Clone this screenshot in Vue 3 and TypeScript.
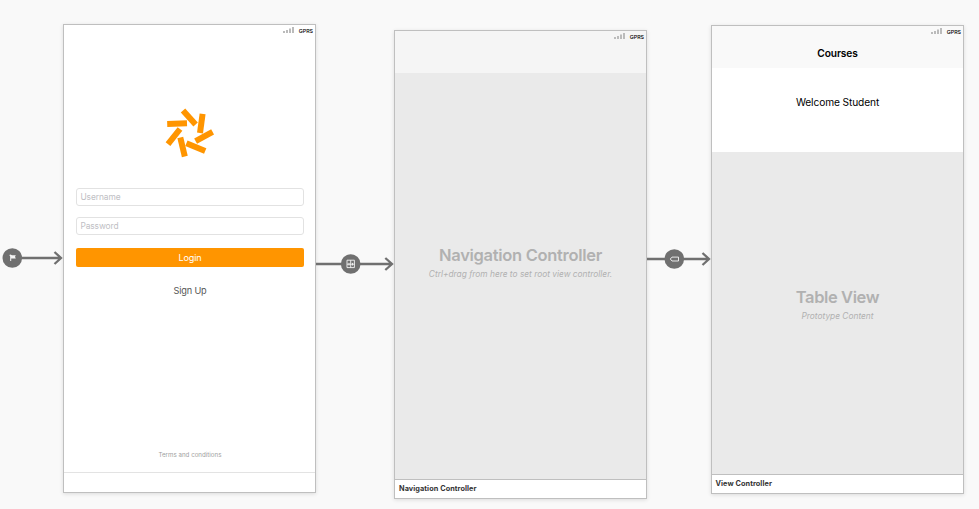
<script setup lang="ts">
interface Segue {
  name: string
  kind: 'entry' | 'root' | 'relation'
}

const segues: Segue[] = [
  { name: 'start', kind: 'entry' },
  { name: 'login', kind: 'root' },
  { name: 'courses', kind: 'relation' },
]

const blades: string[] = [
  'M33 15.6 45.6 29.4',
  'M52.6 18.8 50 38',
  'M62.6 36.9 45.6 46.2',
  'M36.4 48.2 55.2 56',
  'M30.3 42.5 34.8 61.5',
  'M30 34 18 49.2',
  'M17.2 29 37 28.3',
]
</script>

<template>
  <main class="canvas">
    <section class="scene scene-login">
      <div class="status">
        <svg class="signal" width="12" height="7" viewBox="0 0 12 7">
          <path d="M0 4h2V6H0zM3 3h2V6H3zM6 1.5h2V6H6zM9 0h2v6H9z" />
        </svg>
        <span>GPRS</span>
      </div>
      <div class="login-body">
        <svg class="logo" width="80" height="75" viewBox="0 0 80 75">
          <path v-for="d in blades" :key="d" :d="d" />
        </svg>
        <div class="field">Username</div>
        <div class="field">Password</div>
        <div class="button">Login</div>
        <div class="signup">Sign Up</div>
        <div class="terms">Terms and conditions</div>
      </div>
      <footer class="dock"></footer>
    </section>

    <section class="scene scene-nav">
      <div class="bar">
        <div class="status">
          <svg class="signal" width="12" height="7" viewBox="0 0 12 7">
            <path d="M0 4h2V6H0zM3 3h2V6H3zM6 1.5h2V6H6zM9 0h2v6H9z" />
          </svg>
          <span>GPRS</span>
        </div>
      </div>
      <div class="placeholder">
        <h2 class="nav-title">Navigation Controller</h2>
        <p class="nav-hint">Ctrl+drag from here to set root view controller.</p>
      </div>
      <footer class="dock"><span>Navigation Controller</span></footer>
    </section>

    <section class="scene scene-courses">
      <div class="bar">
        <div class="status">
          <svg class="signal" width="12" height="7" viewBox="0 0 12 7">
            <path d="M0 4h2V6H0zM3 3h2V6H3zM6 1.5h2V6H6zM9 0h2v6H9z" />
          </svg>
          <span>GPRS</span>
        </div>
        <h1>Courses</h1>
      </div>
      <div class="welcome">Welcome Student</div>
      <div class="placeholder">
        <h2 class="table-title">Table View</h2>
        <p class="table-hint">Prototype Content</p>
      </div>
      <footer class="dock"><span>View Controller</span></footer>
    </section>

    <div v-for="s in segues" :key="s.name" class="segue" :class="`segue-${s.name}`">
      <svg v-if="s.kind === 'entry'" width="64" height="22" viewBox="0 0 64 22">
        <path class="line" d="M12 11H61M54.5 5 61 11 54.5 17" />
        <circle cx="12.3" cy="11" r="9.8" />
        <path class="solid" d="M9.3 8 10.5 7.4 12 8.2H15.8L15 9.8 15.8 11.4H11.2V14H10.2V9.4z" />
      </svg>
      <svg v-else-if="s.kind === 'root'" width="80" height="22" viewBox="0 0 80 22">
        <path class="line" d="M0 11H76M69.3 5 76 11 69.3 17" />
        <circle cx="34.7" cy="11" r="9.8" />
        <path class="glyph" d="M31 7.2H38.4V14.6H31zM34.7 7.2V14.6M31 11.2H38.4M33 9.9V12.5M36.5 9.9V12.5" />
      </svg>
      <svg v-else width="66" height="22" viewBox="0 0 66 22">
        <path class="line" d="M0 11H62M55.5 5 62 11 55.5 17" />
        <circle cx="27.3" cy="11" r="9.8" />
        <path class="glyph" d="M23.3 11 25 9.1H31.5V13H25z" />
      </svg>
    </div>
  </main>
</template>

<style>
body {
  background: #f9f9f9;
}
</style>

<style scoped>
.canvas {
  position: relative;
  width: 979px;
  height: 509px;
  overflow: hidden;
  background: #f9f9f9;
  font-family: Inter, 'Liberation Sans', sans-serif;
  color: #000;
}

/* Scenes sit on a free storyboard canvas. */
.scene {
  position: absolute;
  display: flex;
  flex-direction: column;
  box-sizing: border-box;
  width: 253px;
  height: 469px;
  border: 1px solid #bfbfbf;
  background: #fff;
  box-shadow: 0 1px 4px rgba(0, 0, 0, 0.12);
}

.scene-login {
  left: 63px;
  top: 24px;
}

.scene-nav {
  left: 394px;
  top: 30px;
}

.scene-courses {
  left: 711px;
  top: 25px;
}

.status {
  display: flex;
  justify-content: flex-end;
  gap: 4px;
  height: 12px;
  padding: 2px 2px 0 0;
  box-sizing: border-box;
  font-size: 5.3px;
  font-weight: 500;
  line-height: 9px;
}

.signal {
  fill: #bbb;
}

.login-body {
  display: flex;
  flex: 1;
  flex-direction: column;
  padding: 0 11px 0 12px;
}

.logo {
  margin: 58px 0 18px 74px;
  fill: none;
  stroke: #ff9500;
  stroke-width: 6;
}

.field {
  box-sizing: border-box;
  height: 18px;
  margin-bottom: 11px;
  padding-left: 3.4px;
  border: 1px solid #e2e2e2;
  border-radius: 3px;
  font-size: 8.4px;
  letter-spacing: -0.08px;
  line-height: 17px;
  color: #c0c0c4;
}

.button {
  height: 19px;
  margin-top: 2px;
  border-radius: 2px;
  background: #ff9500;
  color: #fff;
  font-size: 9.1px;
  letter-spacing: -0.18px;
  line-height: 19px;
  text-align: center;
}

.signup {
  margin-top: 17px;
  font-size: 9.2px;
  letter-spacing: -0.16px;
  line-height: 14px;
  text-align: center;
  color: #555;
}

.terms {
  margin-top: auto;
  margin-bottom: 12px;
  font-size: 6.2px;
  line-height: 11px;
  text-align: center;
  color: #a0a0a0;
}

.dock {
  height: 18px;
  padding-left: 4px;
  border-top: 1px solid #bfbfbf;
  background: #fff;
  font-size: 7.3px;
  font-weight: 700;
  letter-spacing: 0.08px;
  line-height: 18px;
  color: #333;
}

.scene-login .dock {
  height: 19px;
  border-color: #e3e3e3;
}

.scene-courses .dock {
  padding-left: 3.5px;
}

.bar {
  height: 42px;
  background: #f9f9f9;
}

.scene-nav .bar {
  background: #f5f5f5;
}

h1 {
  margin: 8px 0 0;
  font-size: 10.2px;
  font-weight: 600;
  letter-spacing: -0.1px;
  line-height: 14px;
  text-align: center;
}

.welcome {
  height: 84px;
  box-sizing: border-box;
  padding-top: 27px;
  font-size: 10.2px;
  letter-spacing: -0.12px;
  line-height: 14px;
  text-align: center;
}

.placeholder {
  display: flex;
  flex: 1;
  flex-direction: column;
  align-items: center;
  box-sizing: border-box;
  padding-top: 135px;
  background: #eaeaea;
  color: #b1b1b1;
}

.scene-nav .placeholder {
  padding-top: 172px;
}

h2 {
  margin: 0;
  font-size: 16.5px;
  font-weight: 600;
  letter-spacing: -0.31px;
  line-height: 21px;
  white-space: nowrap;
}

.table-title {
  letter-spacing: -0.4px;
}

p {
  margin: 0;
  font-size: 8.35px;
  font-style: italic;
  line-height: 16px;
  white-space: nowrap;
}

/* Connectors run between the scenes. */
.segue {
  position: absolute;
  height: 22px;
}

.segue svg {
  display: block;
}

.segue-start {
  left: 0;
  top: 247px;
}

.segue-login {
  left: 316px;
  top: 253px;
}

.segue-courses {
  left: 647px;
  top: 248px;
}

.line {
  fill: none;
  stroke: #707070;
  stroke-width: 2.3;
}

circle {
  fill: #707070;
}

.glyph {
  fill: none;
  stroke: #f5f5f5;
  stroke-width: 0.9;
}

.solid {
  fill: #f5f5f5;
}
</style>
